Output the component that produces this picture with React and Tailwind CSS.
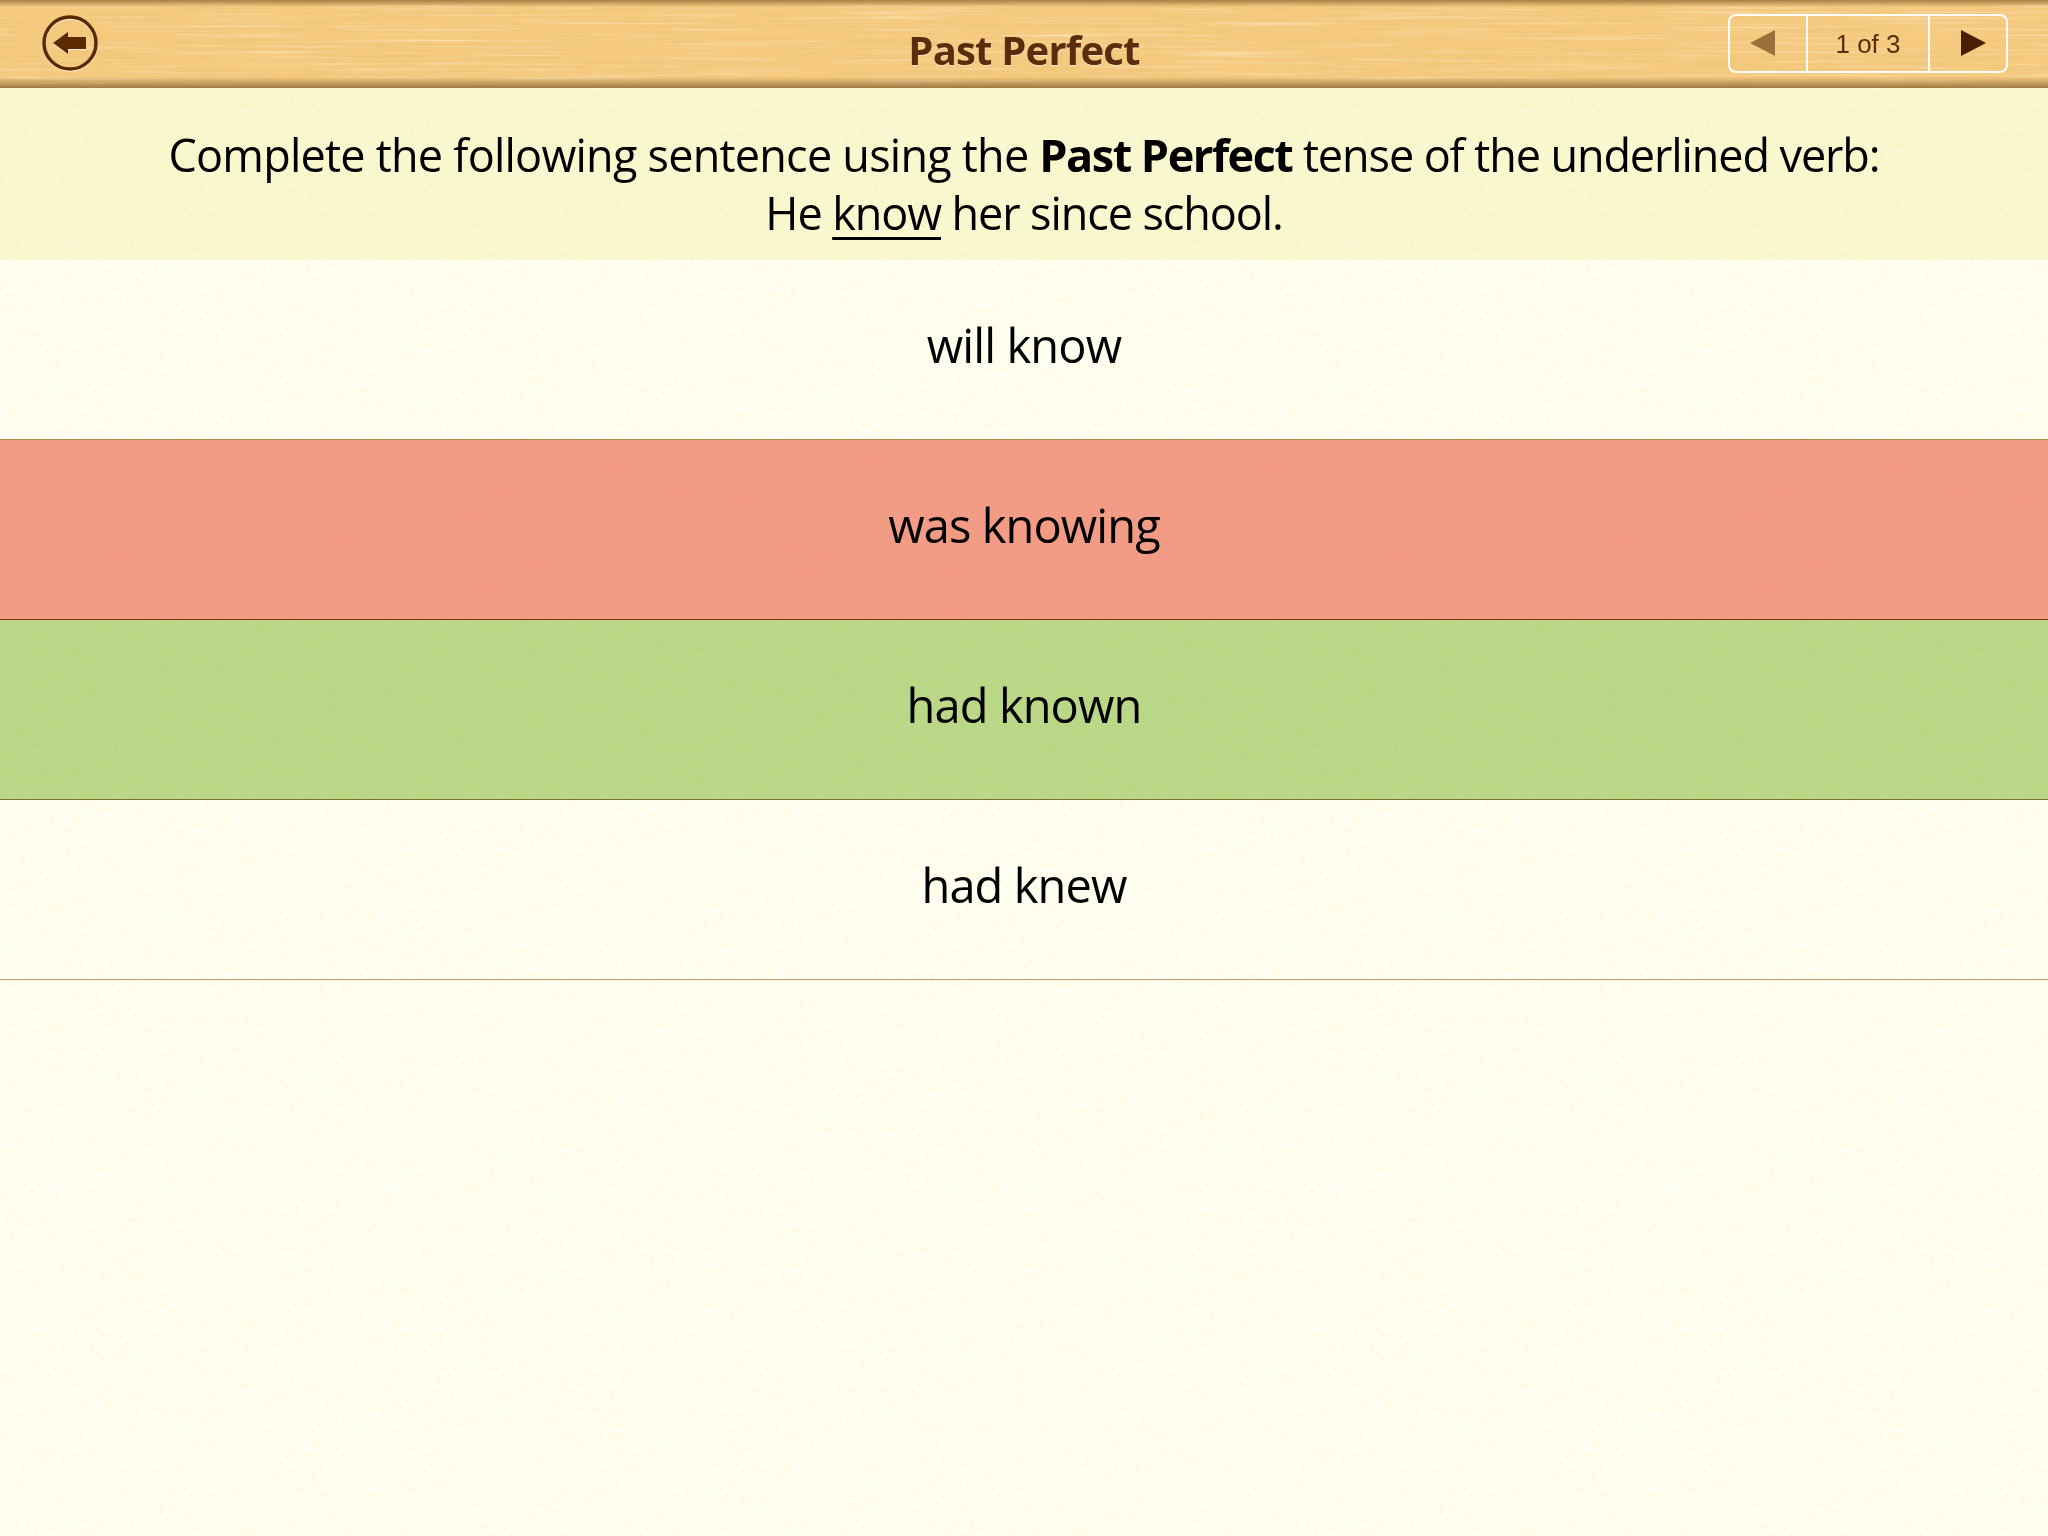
const answers = [
  { label: "will know", rowClass: "bg-[#fffef3] border-[#b08a45]" },
  { label: "was knowing", rowClass: "bg-[#f29c88] border-[#7f3a0c]" },
  { label: "had known", rowClass: "bg-[#bad88a] border-[#7d7030]" },
  { label: "had knew", rowClass: "bg-[#fffef3] border-[#b8a273]" },
];

const WoodTexture = () => (
  <svg className="absolute inset-0 h-full w-full" xmlns="http://www.w3.org/2000/svg">
    <defs>
      <filter id="wood" x="0" y="0" width="100%" height="100%">
        <feTurbulence type="fractalNoise" baseFrequency="0.006 0.5" numOctaves="4" seed="11" />
        <feColorMatrix
          type="matrix"
          values="0 0 0 0 0.93  0 0 0 0 0.60  0 0 0 0 0.22  2.4 0 0 0 -0.98"
        />
      </filter>
      <filter id="woodLight" x="0" y="0" width="100%" height="100%">
        <feTurbulence type="fractalNoise" baseFrequency="0.006 0.35" numOctaves="3" seed="23" />
        <feColorMatrix
          type="matrix"
          values="0 0 0 0 0.97  0 0 0 0 0.84  0 0 0 0 0.58  1.6 0 0 0 -0.8"
        />
      </filter>
    </defs>
    <rect width="100%" height="100%" filter="url(#woodLight)" />
    <rect width="100%" height="100%" filter="url(#wood)" />
  </svg>
);

const PaperTexture = () => (
  <svg
    className="pointer-events-none absolute inset-0 h-full w-full mix-blend-multiply"
    xmlns="http://www.w3.org/2000/svg"
  >
    <defs>
      <filter id="paper" x="0" y="0" width="100%" height="100%">
        <feTurbulence type="fractalNoise" baseFrequency="0.2" numOctaves="2" seed="3" />
        <feColorMatrix
          type="matrix"
          values="0 0 0 0 1  0 0 0 0 0.94  0 0 0 0 0.62  1.0 0 0 0 -0.42"
        />
      </filter>
    </defs>
    <rect width="100%" height="100%" filter="url(#paper)" />
  </svg>
);

const BackIcon = () => (
  <svg width="60" height="60" viewBox="0 0 60 60" className="drop-shadow-[0_1px_0_rgba(255,255,255,0.7)]">
    <circle cx="30" cy="30" r="26" fill="none" stroke="#5c2a00" strokeWidth="3.5" />
    <path d="M13 30 L28 19 V24 H46 V36 H28 V41 Z" fill="#5c2a00" />
  </svg>
);

const App = () => {
  return (
    <div className="h-[1536px] w-full overflow-hidden bg-[#fffef3] font-['Open_Sans','Noto_Sans',sans-serif] text-black">
      {/* HEADER */}
      <header className="relative grid h-[88px] grid-cols-[1fr_auto_1fr] items-center bg-[#f3c77c]">
        <WoodTexture />
        <div className="absolute inset-x-0 top-0 h-[7px] bg-gradient-to-b from-[#a87f45] to-transparent" />
        <div className="absolute inset-x-0 bottom-0 h-[11px] bg-gradient-to-t from-[#9c7a44] to-transparent" />

        <div className="relative pl-10">
          <button className="block h-[60px] w-[60px] -translate-y-[1px]">
            <BackIcon />
          </button>
        </div>

        <h1 className="relative pt-[11px] text-[40px] font-bold tracking-[-0.8px] text-[#5c2d0c] [text-shadow:0_1px_0_rgba(255,255,255,0.5)]">
          Past Perfect
        </h1>

        <div className="relative flex justify-end pr-[40px]">
          <div className="flex h-[59px] w-[280px] -translate-y-[1px] items-stretch rounded-lg border-2 border-white">
            <button className="flex w-[78px] items-center justify-center border-r-2 border-white pr-[10px]">
              <svg width="26" height="26" viewBox="0 0 26 26">
                <path d="M0 13 L25 0 V26 Z" fill="#9c7038" />
              </svg>
            </button>
            <div className="flex flex-1 items-center justify-center pt-[2px] font-['Liberation_Sans',sans-serif] text-[26px] text-[#5c2d0a]">
              1 of 3
            </div>
            <button className="flex w-[78px] items-center justify-center border-l-2 border-white pl-[10px]">
              <svg width="26" height="26" viewBox="0 0 26 26">
                <path d="M26 13 L1 0 V26 Z" fill="#4a1e00" />
              </svg>
            </button>
          </div>
        </div>
      </header>

      <main className="relative h-[1448px]">
        {/* QUESTION */}
        <section className="flex h-[172px] flex-col items-center justify-center bg-[#f9f8d3] pt-[20px] text-[45px] leading-[58px] tracking-[-1.1px]">
          <p className="relative z-10">
            <span className="tracking-[-0.77px]">Complete the following sentence using the </span>
            <b className="tracking-[-1.5px]">Past Perfect</b> tense of the underlined verb:
          </p>
          <p className="relative z-10">
            He <span className="underline decoration-[3px] underline-offset-[7px]">know</span> her since school.
          </p>
        </section>

        {/* ANSWERS */}
        {answers.map((answer) => (
          <div
            key={answer.label}
            className={`flex h-[180px] items-center justify-center border-b-[1px] text-[47px] tracking-[-0.9px] ${answer.rowClass}`}
          >
            <span className="relative z-10 -translate-y-[4px]">{answer.label}</span>
          </div>
        ))}

        <PaperTexture />
      </main>
    </div>
  );
};

export default App;
